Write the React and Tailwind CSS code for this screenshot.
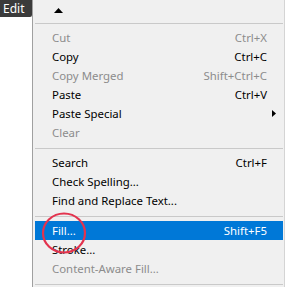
const groups = [
  [
    { label: 'Cut', key: 'Ctrl+X', off: true },
    { label: 'Copy', key: 'Ctrl+C' },
    { label: 'Copy Merged', key: 'Shift+Ctrl+C', off: true },
    { label: 'Paste', key: 'Ctrl+V' },
    { label: 'Paste Special', sub: true },
    { label: 'Clear', off: true },
  ],
  [
    { label: 'Search', key: 'Ctrl+F' },
    { label: 'Check Spelling...' },
    { label: 'Find and Replace Text...' },
  ],
  [
    { label: 'Fill...', key: 'Shift+F5', active: true },
    { label: 'Stroke...' },
    { label: 'Content-Aware Fill...', off: true },
  ],
]

function Row({ item }) {
  const color = item.active ? 'bg-[#0078d7] text-white' : item.off ? 'text-[#8c8c8c]' : 'text-black'
  return (
    <div className={`relative flex items-center h-[19px] pl-[17px] pr-[16px] ${color}`}>
      <span className="flex-1">{item.label}</span>
      {item.key && <span>{item.key}</span>}
      {item.sub && (
        <svg className="absolute right-[7px] top-[6px]" width="4" height="7" viewBox="0 0 4 7">
          <path d="M0 0 L4 3.5 L0 7 Z" fill="#000" />
        </svg>
      )}
    </div>
  )
}

const Sep = () => <div className="pt-[6px] pb-[4px]"><div className="h-px bg-[#c9c9c9]" /></div>

export default function App() {
  return (
    <div className="relative w-[286px] h-[287px] bg-white overflow-hidden text-[11.4px] leading-none" style={{ fontFamily: '"Noto Sans", "Open Sans", sans-serif' }}>
      <div className="flex h-full">
        <div className="w-[32px] h-[17px] bg-[#3b3b3b] text-white text-[12px] rounded-br-[2px] pl-[3px] pt-[2px] leading-[13px]">Edit</div>
        <div className="w-[253px] h-full bg-[#f0f0f0] border-l border-[#a0a0a0] border-r border-r-[#d4d4d4]">
          <div className="pl-[2px] pr-[1px]">
            <div className="h-[17px] flex items-center pl-[19px] pt-[3px]">
              <svg width="9" height="5" viewBox="0 0 9 5"><path d="M0 5 L4.5 0 L9 5 Z" fill="#000" /></svg>
            </div>
            {groups.map((g, i) => (
              <div key={i}>
                <Sep />
                {g.map(it => <Row key={it.label} item={it} />)}
              </div>
            ))}
            <Sep />
          </div>
        </div>
      </div>
      <svg className="absolute left-[41px] top-[211px]" width="46" height="44" viewBox="0 0 46 44">
        <ellipse cx="23" cy="22" rx="21" ry="19.5" fill="none" stroke="#e3334e" strokeWidth="2.2" />
      </svg>
    </div>
  )
}
